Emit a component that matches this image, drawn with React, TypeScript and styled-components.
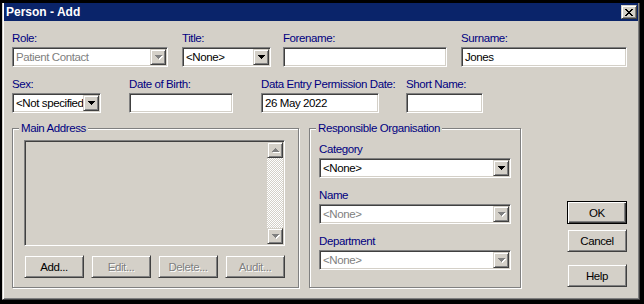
import styled, { createGlobalStyle, css } from 'styled-components'

const FONT = `"Liberation Sans Narrow", "Arial Narrow", "Liberation Sans", Arial, sans-serif`

const GlobalStyle = createGlobalStyle`
  html, body {
    margin: 0;
    padding: 0;
    background: #000;
  }
  body {
    width: 644px;
    height: 304px;
    overflow: hidden;
    font-family: ${FONT};
  }
`

// the dialog font is a narrow sans, squeeze the regular one a bit
const uiText = css`
  font-size: 11.5px;
  letter-spacing: -0.4px;
`

// classic 3d edges
const raised = css`
  border: 1px solid;
  border-color: #d4d0c8 #404040 #404040 #d4d0c8;
  box-shadow: inset 1px 1px 0 #fff, inset -1px -1px 0 #808080;
`
const sunken = css`
  border: 1px solid;
  border-color: #808080 #fff #fff #808080;
  box-shadow: inset 1px 1px 0 #404040, inset -1px -1px 0 #d4d0c8;
`

const Tri = ({ up, disabled }: { up?: boolean; disabled?: boolean }) => {
  const d = up
    ? 'M3 0h1v1H3z M2 1h3v1H2z M1 2h5v1H1z M0 3h7v1H0z'
    : 'M0 0h7v1H0z M1 1h5v1H1z M2 2h3v1H2z M3 3h1v1H3z'
  return (
    <svg width="8" height="5" viewBox="0 0 8 5" shapeRendering="crispEdges">
      {disabled && <path d={d} fill="#fff" transform="translate(1,1)" />}
      <path d={d} fill={disabled ? '#808080' : '#000'} />
    </svg>
  )
}

const CloseGlyph = () => (
  <svg width="8" height="7" viewBox="0 0 8 7" shapeRendering="crispEdges">
    <path
      fill="#000"
      d="M0 0h2v1H0z M6 0h2v1H6z M1 1h2v1H1z M5 1h2v1H5z M2 2h4v1H2z M3 3h2v1H3z M2 4h4v1H2z M1 5h2v1H1z M5 5h2v1H5z M0 6h2v1H0z M6 6h2v1H6z"
    />
  </svg>
)

const ComboBox = ({ value, width, disabled }: { value: string; width: number; disabled?: boolean }) => (
  <Combo style={{ width }}>
    <ComboText $dim={disabled}>{value}</ComboText>
    <ArrowButton>
      <Tri disabled={disabled} />
    </ArrowButton>
  </Combo>
)

const App = () => {
  return (
    <>
      <GlobalStyle />
      <Screen>
        <Window>
          <TitleBar>
            <TitleText>Person - Add</TitleText>
            <CloseButton>
              <CloseGlyph />
            </CloseButton>
          </TitleBar>
          <Body>
            <Row>
              <Field $w={156}>
                <Label>Role:</Label>
                <ComboBox value="Patient Contact" width={156} disabled />
              </Field>
              <Field $w={89} $ml={14}>
                <Label>Title:</Label>
                <ComboBox value="<None>" width={89} />
              </Field>
              <Field $w={164} $ml={12}>
                <Label>Forename:</Label>
                <TextBox />
              </Field>
              <Field $w={166} $ml={14}>
                <Label>Surname:</Label>
                <TextBox>Jones</TextBox>
              </Field>
            </Row>
            <Row $mt={10}>
              <Field $w={89}>
                <Label>Sex:</Label>
                <ComboBox value="<Not specified>" width={89} />
              </Field>
              <Field $w={104} $ml={28}>
                <Label>Date of Birth:</Label>
                <TextBox />
              </Field>
              <Field $w={118} $ml={28}>
                <Label>Data Entry Permission Date:</Label>
                <TextBox>26 May 2022</TextBox>
              </Field>
              <Field $w={77} $ml={27}>
                <Label>Short Name:</Label>
                <TextBox />
              </Field>
            </Row>
            <Lower>
              <Group $w={287}>
                <GroupTitle>Main Address</GroupTitle>
                <AddressInner>
                  <ListBox>
                    <ListArea />
                    <ScrollBar>
                      <ArrowButton>
                        <Tri up disabled />
                      </ArrowButton>
                      <Track />
                      <ArrowButton>
                        <Tri disabled />
                      </ArrowButton>
                    </ScrollBar>
                  </ListBox>
                  <ButtonRow>
                    <PushButton>Add...</PushButton>
                    <PushButton $disabled>Edit...</PushButton>
                    <PushButton $disabled>Delete...</PushButton>
                    <PushButton $disabled>Audit...</PushButton>
                  </ButtonRow>
                </AddressInner>
              </Group>
              <Group $w={212} $ml={10}>
                <GroupTitle>Responsible Organisation</GroupTitle>
                <OrgInner>
                  <OrgCell>
                    <Label>Category</Label>
                    <ComboBox value="<None>" width={192} />
                  </OrgCell>
                  <OrgCell>
                    <Label>Name</Label>
                    <ComboBox value="<None>" width={192} disabled />
                  </OrgCell>
                  <OrgCell>
                    <Label>Department</Label>
                    <ComboBox value="<None>" width={192} disabled />
                  </OrgCell>
                </OrgInner>
              </Group>
              <DialogButtons>
                <PushButton $default>OK</PushButton>
                <PushButton $mt={5}>Cancel</PushButton>
                <PushButton $mt={12}>Help</PushButton>
              </DialogButtons>
            </Lower>
          </Body>
        </Window>
      </Screen>
    </>
  )
}

export default App

const Screen = styled.div`
  width: 644px;
  height: 304px;
  box-sizing: border-box;
  padding: 3px 4px 4px 2px;
  display: flex;
`
const Window = styled.div`
  flex: 1;
  display: flex;
  flex-direction: column;
  background: #d4d0c8;
  border-style: solid;
  border-width: 0 1px 1px 1px;
  border-color: #d4d0c8 #404040 #404040 #d4d0c8;
  box-shadow: inset 1px 0 0 #fff, inset -1px -1px 0 #808080;
`
const TitleBar = styled.div`
  height: 18px;
  margin: 0 1px;
  padding: 0 1px 0 2px;
  background: #0a246a;
  display: flex;
  align-items: center;
  justify-content: space-between;
`
const TitleText = styled.div`
  color: #fff;
  font-family: "Liberation Sans", Arial, sans-serif;
  font-weight: bold;
  font-size: 12px;
  line-height: 14px;
`
const CloseButton = styled.div`
  ${raised};
  box-sizing: border-box;
  width: 16px;
  height: 14px;
  background: #d4d0c8;
  display: flex;
  align-items: center;
  justify-content: center;
`
const Body = styled.div`
  display: flex;
  flex-direction: column;
  padding: 10px 0 0 9px;
`
const Row = styled.div<{ $mt?: number }>`
  display: flex;
  align-items: flex-start;
  margin-top: ${p => p.$mt ?? 0}px;
`
const Field = styled.div<{ $w: number; $ml?: number }>`
  width: ${p => p.$w}px;
  margin-left: ${p => p.$ml ?? 0}px;
  display: flex;
  flex-direction: column;
`
const Label = styled.div`
  ${uiText};
  height: 14px;
  line-height: 14px;
  margin-bottom: 2px;
  color: #000080;
  white-space: nowrap;
`
const TextBox = styled.div`
  ${sunken};
  ${uiText};
  box-sizing: border-box;
  height: 20px;
  padding: 1px 3px;
  background: #fff;
  line-height: 16px;
  color: #000;
  white-space: nowrap;
  overflow: hidden;
`
const Combo = styled.div`
  ${sunken};
  box-sizing: border-box;
  height: 20px;
  padding: 1px;
  background: #fff;
  display: flex;
  align-items: center;
`
const ComboText = styled.div<{ $dim?: boolean }>`
  ${uiText};
  flex: 1;
  min-width: 0;
  padding-left: 2px;
  line-height: 16px;
  color: ${p => (p.$dim ? '#808080' : '#000')};
  white-space: nowrap;
  overflow: hidden;
`
const ArrowButton = styled.div`
  ${raised};
  box-sizing: border-box;
  flex: none;
  width: 16px;
  height: 16px;
  background: #d4d0c8;
  display: flex;
  align-items: center;
  justify-content: center;
  svg {
    margin: 1px 0 0 1px;
  }
`
const Lower = styled.div`
  display: flex;
  align-items: stretch;
  margin-top: 8px;
`
const Group = styled.fieldset<{ $w: number; $ml?: number }>`
  box-sizing: border-box;
  width: ${p => p.$w}px;
  margin: 0 0 0 ${p => p.$ml ?? 0}px;
  padding: 0;
  min-width: 0;
  border: 1px solid #808080;
  box-shadow: inset 1px 1px 0 #fff, 1px 1px 0 #fff;
`
const GroupTitle = styled.legend`
  ${uiText};
  margin-left: 6px;
  padding: 0 2px;
  height: 14px;
  line-height: 14px;
  color: #000080;
  background: #d4d0c8;
`
const AddressInner = styled.div`
  padding: 5px 11px 9px 11px;
  display: flex;
  flex-direction: column;
`
const ListBox = styled.div`
  ${sunken};
  box-sizing: border-box;
  width: 261px;
  height: 106px;
  padding: 1px;
  background: #d4d0c8;
  display: flex;
`
const ListArea = styled.div`
  flex: 1;
`
const ScrollBar = styled.div`
  width: 16px;
  display: flex;
  flex-direction: column;
`
const Track = styled.div`
  flex: 1;
  background-image: repeating-conic-gradient(#fff 0 25%, #d4d0c8 0 50%);
  background-size: 2px 2px;
`
const ButtonRow = styled.div`
  display: flex;
  gap: 7px;
  margin-top: 9px;
`
const PushButton = styled.div<{ $disabled?: boolean; $default?: boolean; $mt?: number }>`
  ${raised};
  ${uiText};
  box-sizing: border-box;
  width: 60px;
  height: 23px;
  margin-top: ${p => p.$mt ?? 0}px;
  background: #d4d0c8;
  display: flex;
  align-items: center;
  justify-content: center;
  color: ${p => (p.$disabled ? '#808080' : '#000')};
  text-shadow: ${p => (p.$disabled ? '1px 1px 0 #fff' : 'none')};
  ${p =>
    p.$default &&
    css`
      border-color: #000;
      box-shadow: inset 1px 1px 0 #fff, inset -1px -1px 0 #404040, inset -2px -2px 0 #808080;
    `}
`
const OrgInner = styled.div`
  padding: 7px 9px 0 9px;
  display: flex;
  flex-direction: column;
  gap: 10px;
`
const OrgCell = styled.div`
  display: flex;
  flex-direction: column;
`
const DialogButtons = styled.div`
  align-self: flex-end;
  margin: 0 12px 1px auto;
  display: flex;
  flex-direction: column;
`
